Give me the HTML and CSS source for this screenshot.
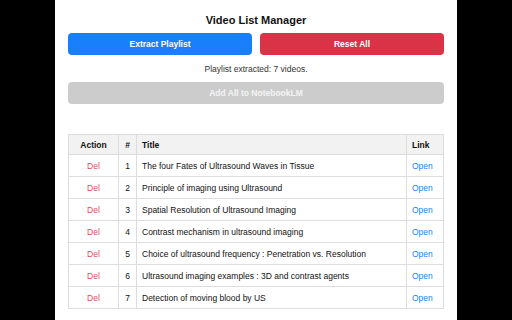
FILE: index.html
```html
<!DOCTYPE html>
<html lang="en">
<head>
    <meta charset="UTF-8">
    <title>Video List Manager</title>
    <link rel="stylesheet" href="styles.css">
</head>
<body>
    <div class="panel">
        <h3 class="panel-title">Video List Manager</h3>

        <div class="btn-row">
            <button class="btn btn-blue">Extract Playlist</button>
            <button class="btn btn-red">Reset All</button>
        </div>

        <p class="status">Playlist extracted: 7 videos.</p>

        <button class="btn btn-grey" disabled>Add All to NotebookLM</button>

        <table class="video-table">
            <thead>
                <tr>
                    <th class="col-action">Action</th>
                    <th class="col-num">#</th>
                    <th class="col-title">Title</th>
                    <th class="col-link">Link</th>
                </tr>
            </thead>
            <tbody>
                <tr>
                    <td class="col-action"><a class="del">Del</a></td>
                    <td class="col-num">1</td>
                    <td class="col-title">The four Fates of Ultrasound Waves in Tissue</td>
                    <td class="col-link"><a class="open">Open</a></td>
                </tr>
                <tr>
                    <td class="col-action"><a class="del">Del</a></td>
                    <td class="col-num">2</td>
                    <td class="col-title">Principle of imaging using Ultrasound</td>
                    <td class="col-link"><a class="open">Open</a></td>
                </tr>
                <tr>
                    <td class="col-action"><a class="del">Del</a></td>
                    <td class="col-num">3</td>
                    <td class="col-title">Spatial Resolution of Ultrasound Imaging</td>
                    <td class="col-link"><a class="open">Open</a></td>
                </tr>
                <tr>
                    <td class="col-action"><a class="del">Del</a></td>
                    <td class="col-num">4</td>
                    <td class="col-title">Contrast mechanism in ultrasound imaging</td>
                    <td class="col-link"><a class="open">Open</a></td>
                </tr>
                <tr>
                    <td class="col-action"><a class="del">Del</a></td>
                    <td class="col-num">5</td>
                    <td class="col-title">Choice of ultrasound frequency : Penetration vs. Resolution</td>
                    <td class="col-link"><a class="open">Open</a></td>
                </tr>
                <tr>
                    <td class="col-action"><a class="del">Del</a></td>
                    <td class="col-num">6</td>
                    <td class="col-title">Ultrasound imaging examples : 3D and contrast agents</td>
                    <td class="col-link"><a class="open">Open</a></td>
                </tr>
                <tr>
                    <td class="col-action"><a class="del">Del</a></td>
                    <td class="col-num">7</td>
                    <td class="col-title">Detection of moving blood by US</td>
                    <td class="col-link"><a class="open">Open</a></td>
                </tr>
            </tbody>
        </table>
    </div>
</body>
</html>
```

FILE: styles.css
```css
body {
    font-family: 'Liberation Sans', Arial, sans-serif;
    margin: 0;
    padding: 0;
    background-color: #000000;
    color: #222222;
}

.panel {
    width: 402px;
    min-height: 100vh;
    margin: 0 auto;
    padding: 14px 13px 0;
    box-sizing: border-box;
    background-color: #ffffff;
}

.panel-title {
    margin: 0 0 7px;
    text-align: center;
    font-size: 11px;
    font-weight: bold;
    color: #111111;
}

.btn-row {
    display: flex;
    gap: 8px;
}

.btn {
    flex: 1;
    height: 22px;
    border: none;
    border-radius: 4px;
    color: #ffffff;
    font-family: inherit;
    font-size: 8.5px;
    font-weight: bold;
    cursor: pointer;
}

.btn-blue {
    background-color: #1a7ffb;
}

.btn-red {
    background-color: #da3347;
}

.btn-grey {
    display: block;
    width: 100%;
    background-color: #cccccc;
    color: #f4f4f4;
    cursor: default;
}

.status {
    margin: 9px 0 8px;
    text-align: center;
    font-size: 8.5px;
    color: #333333;
}

.video-table {
    width: 100%;
    margin-top: 30px;
    border-collapse: collapse;
    table-layout: fixed;
    font-size: 8.5px;
    color: #111111;
}

.video-table th,
.video-table td {
    height: 22px;
    padding: 0 5px;
    border: 1px solid #dddddd;
    text-align: left;
    white-space: nowrap;
    box-sizing: border-box;
}

.video-table th {
    height: 20px;
    background-color: #f2f2f2;
    font-weight: bold;
}

.video-table .col-action {
    width: 50px;
    text-align: center;
}

.video-table .col-num {
    width: 18px;
    text-align: center;
}

.video-table .col-link {
    width: 37px;
}

.del {
    color: #e8475b;
}

.open {
    color: #1a7ffb;
}
```
